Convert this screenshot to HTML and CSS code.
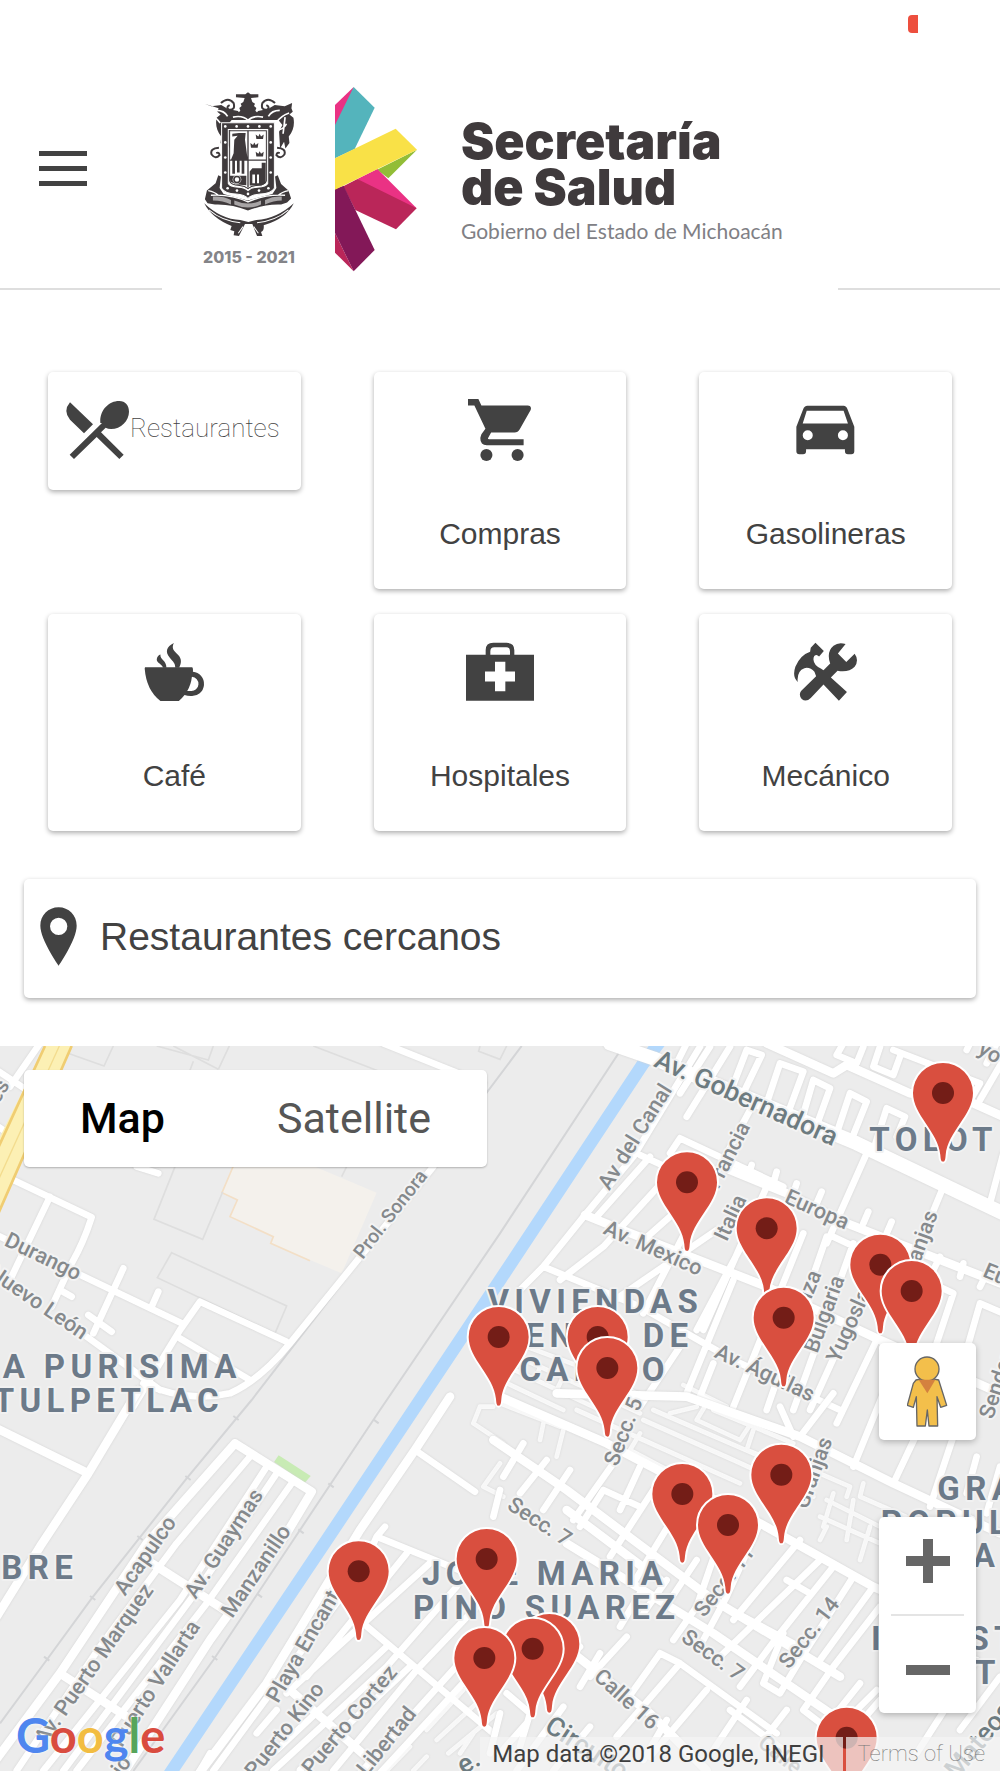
FILE: index.html
```html
<!DOCTYPE html>
<html lang="es">
<head>
<meta charset="utf-8">
<meta name="viewport" content="width=device-width, initial-scale=1">
<title>Secretaría de Salud - Lugares cercanos</title>
<link rel="stylesheet" href="styles.css">
</head>
<body>
<header class="topbar">
  <span class="badge"></span>
  <button class="menu" type="button" aria-label="Menú"><span></span><span></span><span></span></button>
  <a class="brand" href="#">
    <span class="seal">
      <svg class="crest" viewBox="611 274 274 440" aria-hidden="true">
        <g fill="#3f3a3c">
          <path d="M709 284h28l8-6 8 6h23v9l-22 2 4 12 8 5-3 7 7 6-3 8 6 6v10h-57v-10l6-6-3-8 7-6-3-7 8-5 4-12-26-2z"/>
          <path d="M615 312l20 8 30-4 20 12 30 6 10 14h40l10-14 30-6 20-12 30 4 22-10-2 16 4 10-10 8 12 10c4 20 0 40-14 56l2 20-12 16-4-20-12 20-3-50 10-20-12-15-140 0-12 15 10 20-3 50-12-20-4 20-12-16 2-20c-14-16-18-36-14-56l12-10-10-8 4-10z"/>
        </g>
        <g fill="none" stroke="#fff" stroke-width="5">
          <path d="M622 340q24 8 40 30M868 340q-24 8-40 30M630 372q6 14 22 18M860 372q-6 14-22 18M650 332q24 0 34 18M840 332q-24 0-34 18M700 352q30-6 45 10 15-16 45-10M634 352l6 50M856 352l-6 50"/>
        </g>
        <g fill="none" stroke="#3f3a3c" stroke-width="6">
          <path d="M664 310q22-20 38 0 6 22-14 20-10-8 2-14M826 310q-22-20-38 0-6 22 14 20 10-8-2-14M658 444q-28 2-22 20 12 16 24 2-2-10-10-6M832 444q28 2 22 20-12 16-24 2 2-10 10-6"/>
        </g>
        <path fill="#3f3a3c" fill-rule="evenodd" d="M667 369h157v196q-10 16-42 17-28 2-37 14-9-12-37-14-32-1-41-17zM686 389v162q4 10 30 11 20 1 29 10 9-9 29-10 26-1 30-11v-162z"/>
        <g fill="#3f3a3c">
          <path d="M690 393h110v150q-3 12-30 14-16 1-25 9-9-8-25-9-27-2-30-14z" fill="#fff" stroke="#3f3a3c" stroke-width="3"/>
          <path d="M743 393h4v170h-4zM690 479h110v4H690zM728 400l10 0-2 20 8 60h-50l8-20 2-40 10-12-16 2 0-8 20-2zM698 480h8v42h-8zM712 480h8v38h-8zM726 480h8v42h-8zM750 515l8-10h28v-16h12v60l-12 8h-36zM690 528h50v28l-28-2-20-8z"/>
          <path d="M768 404l8 6 4-8 4 8 8-6-2 14h-20zM752 430l8 6 4-8 4 8 8-6-2 14h-20zM768 456l8 6 4-8 4 8 8-6-2 14h-20z"/>
        </g>
        <g fill="#fff"><circle cx="712" cy="539" r="13"/><path d="M758 524h8v26h-8zM772 524h6v26h-6z"/></g>
        <circle cx="712" cy="539" r="9" fill="none" stroke="#3f3a3c" stroke-width="5"/>
        <path fill="#3f3a3c" d="M656 526l8 4-4 34 12 18 72 20 74-20 12-18-4-34 8-4 10 26 22 20 8 24-12 12-18 6q-50-2-99 18-49-20-99-18l-22-4-8-12 6-26 26-22z"/>
        <path fill="none" stroke="#fff" stroke-width="4" d="M626 572q20 4 30 14M866 572q-20 4-30 14M634 586q60-4 111 20 51-24 111-20"/>
        <path fill="#3f3a3c" fill-rule="evenodd" stroke="#fff" stroke-width="3" d="M666 369h158v196q-10 16-42 17-28 2-37 14-9-12-37-14-32-1-42-17zM686 389v162q4 10 30 11 20 1 29 10 9-9 29-10 26-1 30-11v-162z"/>
        <g fill="#fff"><circle cx="677" cy="380" r="4"/><circle cx="711" cy="380" r="4"/><circle cx="745" cy="380" r="4"/><circle cx="779" cy="380" r="4"/><circle cx="813" cy="380" r="4"/><circle cx="677" cy="428" r="4"/><circle cx="677" cy="473" r="4"/><circle cx="677" cy="518" r="4"/><circle cx="813" cy="428" r="4"/><circle cx="813" cy="473" r="4"/><circle cx="813" cy="518" r="4"/><circle cx="684" cy="565" r="4"/><circle cx="712" cy="572" r="4"/><circle cx="745" cy="582" r="4"/><circle cx="778" cy="572" r="4"/><circle cx="806" cy="565" r="4"/></g>
        <path fill="#a7a4a5" d="M640 590q30-2 54 10v14q-24-12-54-12zM704 602q41 18 80 0v12q-39 18-80 0zM796 600q26-12 50-10v12q-24 0-50 12z"/>
        <path fill="#3f3a3c" d="M614 610q50 48 108 50l24 6 24-6q62-4 112-50-22 46-90 66 2 16-8 20l4 12h-16l-14-36h-22l-18 36-16-2 2-12-12-4 4-12q-60-24-82-68z"/>
        <path fill="none" stroke="#fff" stroke-width="3" d="M628 630q40 34 94 38M866 630q-40 34-94 38M716 700l14-20M776 700l-14-20"/>
      </svg>
      <span class="years">2015 - 2021</span>
    </span>
    <svg class="mark" viewBox="1005 260 246 556" aria-hidden="true">
      <path fill="#ea3284" d="M1005 316l56-54-10 60-46 56z"/>
      <path fill="#54b4bc" d="M1061 262l63 62-60 124-59 28v-100z"/>
      <path fill="#92bd37" d="M1251 450l-86 86-34-26z"/>
      <path fill="#ea3284" d="M1072 538l60-30 118 118-100-20z"/>
      <path fill="#ba2659" d="M1030 560l42-22 178 88-62 63-122-58z"/>
      <path fill="#ba2659" d="M1005 700l56 115-56-56z"/>
      <path fill="#831858" d="M1005 568l26-10 93 193-63 64-56-115z"/>
      <path fill="#f9e147" d="M1005 476l182-89 64 63-246 120z"/>
    </svg>
    <span class="names"><strong>Secretaría<br>de Salud</strong><small>Gobierno del Estado de Michoacán</small></span>
  </a>
</header>
<main>
  <nav class="categories" aria-label="Categorías">
    <button class="card card-inline" type="button">
      <svg width="64" height="60" viewBox="200 150 192 180" aria-hidden="true"><path d="M212 157L281 223 254 250 212 209Q190 183 212 157zM303 219C300 180 330 152 360 153C378 154 389 165 389 185C389 212 365 237 335 237Q326 237 319 233L305 247 373 314 360 327 292 261 224 327 211 314 308 219z"/></svg><span class="thin">Restaurantes</span>
    </button>
    <button class="card" type="button">
      <svg width="67" height="67" viewBox="1400 138 200 200" aria-hidden="true"><path d="M1406 147H1437L1446 166H1584Q1597 167 1593 180L1560 238Q1555 247 1545 247H1475L1466 263Q1464 267 1469 267H1572V285H1462Q1441 284 1443 262L1446 252 1458 236 1425 166H1406z"/><circle cx="1461" cy="314" r="18"/><circle cx="1554" cy="314" r="18"/></svg>
      <span>Compras</span>
    </button>
    <button class="card" type="button">
      <svg width="67" height="67" viewBox="876 138 200 200" aria-hidden="true"><path fill-rule="evenodd" d="M922 167H1030Q1038 167 1042 178L1062 230V303Q1062 312 1053 312H1043Q1034 312 1034 303V297H918V303Q918 312 909 312H898Q889 312 889 303V230L909 178Q913 167 922 167zM920 182L908 220H1043L1030 182zM908 255a15 15 0 1 0 30 0a15 15 0 1 0-30 0M1013 255a15 15 0 1 0 30 0a15 15 0 1 0-30 0"/></svg>
      <span>Gasolineras</span>
    </button>
    <button class="card" type="button">
      <svg width="67" height="67" viewBox="424 864 200 200" aria-hidden="true"><path fill-rule="evenodd" d="M436 951H576Q580 951 579 965A36 36 0 0 1 573 1037Q562 1037 554 1034Q548 1042 537 1052H482Q440 1020 435 955zM576 980Q573 1005 562 1022H573A21 21 0 0 0 576 980z"/><path d="M522 879C515 895 520 900 535 915C547 928 544 940 538 953H526C527 940 520 935 510 923C495 905 500 890 522 879M482 913C480 928 500 930 500 953H490C487 942 471 938 471 928C471 920 477 914 482 913z"/></svg>
      <span>Café</span>
    </button>
    <button class="card" type="button">
      <svg width="70" height="67" viewBox="1395 864 210 200" aria-hidden="true"><path fill-rule="evenodd" d="M1398 914H1457V900Q1457 878 1480 878H1520Q1543 878 1543 900V914H1602V1052H1398zM1471 914H1530V903Q1530 891 1519 891H1483Q1471 891 1471 903zM1485 935V964H1455V994H1485V1023H1516V994H1545V964H1516V935z"/></svg>
      <span>Hospitales</span>
    </button>
    <button class="card" type="button">
      <svg width="67" height="67" viewBox="876 864 200 200" aria-hidden="true"><path d="M946 878L971 903 957 919 950 915Q940 915 940 928Q941 945 962 955L970 960 990 940Q978 905 1000 887Q1015 875 1036 882L1013 910 1038 936 1063 911Q1077 930 1063 950Q1045 968 1012 962L992 982 1040 1025 1016 1051 970 1003 932 1043Q918 1057 905 1046Q895 1034 903 1022L948 978 943 965Q930 950 913 954Q890 962 893 995Q876 980 886 950Q900 915 930 905L932 893z"/></svg>
      <span>Mecánico</span>
    </button>
  </nav>
  <h1 class="nearby">
    <svg width="37" height="59" viewBox="122 142 111 177" aria-hidden="true"><path fill-rule="evenodd" d="M178 143C208 143 232 167 232 198C232 240 178 318 178 318C178 318 123 240 123 198C123 167 147 143 178 143zM152 200a26 26 0 1 0 52 0a26 26 0 1 0-52 0"/></svg>
    Restaurantes cercanos
  </h1>
  <section class="map" aria-label="Mapa">
    <svg class="canvas" viewBox="0 0 3000 2175">
      <defs>
        <g id="pin"><path fill="#d94f3f" stroke="#fff" stroke-width="12" paint-order="stroke" d="M0 0C-5 0-7-4-8-20C-14-90-90-140-90-206A90 90 0 0 1 90-206C90-140 14-90 8-20C7-4 5 0 0 0z"/><circle cy="-206" r="33" fill="#731d17"/></g>
      </defs>
      <rect width="3000" height="2175" fill="#ececec"/>
      <path fill="#f4f1ec" d="M700 360H940L1130 440 1025 682 812 592 820 572 690 512 712 462 666 440z"/>
      <path fill="none" stroke="#f3dfc6" stroke-width="5" d="M700 360L666 440 712 462 690 512 820 572 812 592 930 644"/>
      <path fill="#c8ebb4" d="M836 1228L932 1290 914 1311 822 1248z"/>
      <g class="lots">
        <path d="M200 20L312 60 340 0M470 0L625 42 640 0M560 100L580 46M655 70L688 0M520 0L655 70M940 0L1200 100M1440 0L1436 16 1500 40 1520 0M525 362L462 520 608 580 668 438M515 620L860 780 825 862 472 695zM1040 362L1025 392"/>
      </g>
      <g class="rail">
        <path d="M1870 0L1500 562 1140 1092 880 1482 640 1842 400 2175M1565 0L1280 380 960 797 755 1062 560 1297 275 1657 140 1842 0 2032M1120 1120l16 12M985 1312l16 12M895 1450l16 12M770 1642l16 12M636 1830l16 12M700 1110l16 12M556 1290l16 12M412 1470l16 12M270 1650l16 12M132 1832l16 12"/>
      </g>
      <path class="river" d="M1985-20L1930 52 1500 702 1250 1077 980 1482 505 2190"/>
      <g class="roads" transform="translate(0 -48)">
        <path class="w14" d="M120 40L30 170M-10 120L80 180M-5 290L40 320M1150 40L1450 160M1300 410L870 940Q780 1050 690 1090Q560 1120 430 1060M40 450L275 562Q250 640 215 700L155 830M150 500L30 750M-20 610L545 880M370 715L280 910M475 785L455 830M410 410L475 430M600 815L540 900 400 1130M600 815L860 935M540 925L750 1050M260 920L480 1080M265 855L335 905M180 780L215 800"/>
      </g>
      <path fill="#fcf0b4" d="M135 0H215L-4 500V280z"/>
      <path fill="none" stroke="#f0cd72" stroke-width="8" d="M135 0L-4 302M215 0L-4 500"/>
      <path fill="none" stroke="#f3dc8e" stroke-width="4" d="M178 0L-4 400"/>
      <g class="roads" transform="translate(1500 -48)">
        <path class="w24" d="M330 40L460 85 1070 340 1510 550"/>
        <path class="w18" d="M255 555L380 605 800 770 1140 930 1500 1090M690 420L860 490 1040 580 1500 760M800 40L1000 130 1040 105 1230 190M1230 190L1420 220 1510 260"/>
        <path class="w14" d="M600 50L400 380 255 555 130 710M420 375L540 430M540 325L510 370M540 325L850 470M560 40L520 120M630 50L540 190M690 50L560 260M740 60L690 190M740 60L785 75 720 210M840 100L800 220M840 100L910 125 860 260M940 150L905 270M940 150L990 175 945 300M1050 190L1010 310M1050 190L1100 215 1050 340M1160 235L1120 360M1160 235L1215 260 1190 320M1030 40L1010 75 1070 100 1090 50M1140 50L1120 110 1180 135 1200 80M1180 60L1440 160 1400 230M1100 370L980 640M1330 470L1260 640M1510 370L1470 520M450 380L290 560M520 420L310 650 180 750M600 480L420 640M650 600L330 820M750 240L600 520 430 850M800 470L610 900M750 600L590 900M910 610L700 1130M980 620L800 1140M1000 620L1360 790 1290 1000M1060 640L880 1140M1130 930L1010 1180M1030 920L930 1140M130 710L420 830 700 990 1020 1140M130 710L60 780M540 950L420 1130M640 1000L600 1100 720 1160M700 750L560 1090M750 420L755 405M820 460L830 425M880 490L890 460M950 520L965 485M1090 580L1105 545M1160 610L1175 575M1380 740L1390 700M1440 770L1460 730M1440 820L1400 960M1440 820L1510 850M1320 680L1280 760M1490 40L1460 100M1410 40L1400 60M1510 90L1440 210"/>
        <path class="w8" d="M0 920L240 1010 430 1100M0 960L120 1010 420 1150M0 1000L130 1060 300 1140M0 1050L190 1140M120 1010L110 1040M190 1040L170 1080M550 1065L680 1130"/>
      </g>
      <g class="roads" transform="translate(0 1062)">
        <path class="w18" d="M-10 85L265 220M415-30L265 220 120 440-10 650M705 130L440 430 180 820-20 1090M705 130L935 275 860 400 630 720 370 1120M180 820L380 950M440 480L690 640M1350-10L1245 150 1080 390 800 850 590 1130M870 870L1110 1080"/>
        <path class="w14" d="M750 170L530 430 300 740 50 1112M800 200L540 600 130 1112M830 220L600 560 190 1112M875 250L620 610 230 1112M1245 150L1425 275M1155 380L1130 410 1500 560M1220 460L920 830M1300 480L860 880M1370 560L1160 800 820 1112M1090 670L1480 1000M1430 620L1250 810 1000 1112M1440 720L1080 1120M1490 740L1130 1130M1160 740L830 1050M1230 800L900 1110M830 930L770 1000M630 1060L600 1112M1130 410L1090 500 640 1112"/>
        <path class="w8" d="M1480 20L1440 20 1420 70 1510 130M1500 190L1450 260 1510 290M1390 870L1280 990M1440 900L1310 1020M1490 940L1345 1060M1230 1040L1160 1112M1280 1070L1240 1112M1420 1000L1380 1060"/>
      </g>
      <g class="roads" transform="translate(1500 1062)">
        <path class="w18" d="M-20 120L200 270 640 600 1020 830M0-10L320 130 780 370 1120 560 1280 630M170-20L560-10 900 110 1180 250 1500 400M220 760L450 940 620 1112M480 540L200 330M200 430L640 700 1020 960"/>
        <path class="w14" d="M0 270L-20 350M70 130L10 230M140 180L60 280M210 210L130 330M340 190L220 360M240 380L310 270 420 320M420 200L360 330M540 320L400 550M460 270L330 470M590 480L510 600M690 330L590 620 520 720M780 370L680 590 610 720M900 420L700 660M960 480L660 770M1000 500L840 700 720 860M1060 530L900 780 840 880 790 850 850 700M1120 560L960 780M1140 620L1000 800 910 930 1080 1060M880 110L840 20M1000-20L900 110M1150-20L1060 200M1270 60L1180 250M1270 60L1150-10M1360 110L1290 320M1430 170L1400 280M1500 200L1460 340M480 760L540 790 350 1010M480 760L380 900M540 790L830 1000M620 870L450 1070M740 900L640 1050M690 930L850 1050M860 930L790 1020M1080 850L960 1000M1140 900L1010 1050M20 880L90 940 60 1040M500 960L430 1080M380 710L270 830M240 740L170 800M300 760L240 860M0 940L-30 1060M80 970L0 1060M190 920L50 1112M270 980L160 1112M500 540L430 640M420 580L360 680M860 540L930 580M730 650L880 730M1130 870L1060 940M1430 780L1250 1060M1500 830L1380 990"/>
        <path class="w8" d="M0 10L180 80M190 90L170 170M130 70L120 120M230 30L430 120 720 250M430 60L700 180 940 290M460 30L760 160 950 240M420 100L390 150 560 240M510 40L590 20M620 10L590 60 720 120 760 60M640 30L880 130M760 90L740 150 940 230M820 160L1050 260 1040 290M1090 250L1080 290 1240 360M980 300L1160 390M960 350L1140 430M1000 280L970 380M1060 300L1040 420M1110 380L1080 480M980 380L960 420"/>
      </g>
      <g class="streets">
        <g transform="translate(0 -48)">
          <text transform="translate(10 645) rotate(26)">Durango</text>
          <text transform="translate(-40 738) rotate(34)">Nuevo León</text>
          <text class="alley" transform="translate(1088 690) rotate(-52)">Prol. Sonora</text>
          <text transform="translate(-60 320) rotate(-60)">Flores</text>
        </g>
        <g transform="translate(1500 -48)">
          <text class="avenue" transform="translate(458 108) rotate(24)">Av. Gobernadora</text>
          <text transform="translate(328 484) rotate(-58)">Av del Canal</text>
          <text transform="translate(655 480) rotate(-63)">Francia</text>
          <text transform="translate(680 637) rotate(-65)">Italia</text>
          <text transform="translate(850 517) rotate(24)">Europa</text>
          <text transform="translate(307 610) rotate(24)">Av. Mexico</text>
          <text transform="translate(640 980) rotate(25)">Av. Águilas</text>
          <text transform="translate(905 880) rotate(-68)">Suiza</text>
          <text transform="translate(952 972) rotate(-70)">Bulgaria</text>
          <text transform="translate(1018 1002) rotate(-66)">Yugoslavia</text>
          <text transform="translate(1238 760) rotate(-70)">Granjas</text>
          <text transform="translate(1445 738) rotate(23)">Europa</text>
          <text transform="translate(1430 68) rotate(30)">yo</text>
        </g>
        <g transform="translate(0 1062)">
          <text transform="translate(375 590) rotate(-55)">Acapulco</text>
          <text transform="translate(587 600) rotate(-57)">Av. Guaymas</text>
          <text transform="translate(697 657) rotate(-56)">Manzanillo</text>
          <text transform="translate(136 1037) rotate(-55)">Av. Puerto Marquez</text>
          <text transform="translate(365 1045) rotate(-57)">Puerto Vallarta</text>
          <text transform="translate(834 912) rotate(-60)">Playa Encanto</text>
          <text transform="translate(765 1137) rotate(-52)">Puerto Kino</text>
          <text transform="translate(935 1128) rotate(-50)">Puerto Cortez</text>
          <text transform="translate(1100 1130) rotate(-51)">Libertad</text>
          <text transform="translate(345 1160) rotate(-55)">nio</text>
          <text class="avenue" transform="translate(1390 1125) rotate(-30)">e.</text>
        </g>
        <g transform="translate(1500 1062)">
          <text transform="translate(352 202) rotate(-69)">Secc. 5</text>
          <text transform="translate(18 325) rotate(33)">Secc. 7</text>
          <text transform="translate(613 655) rotate(-52)">Secc. 11</text>
          <text transform="translate(540 720) rotate(36)">Secc. 7</text>
          <text transform="translate(867 810) rotate(-52)">Secc. 14</text>
          <text transform="translate(922 330) rotate(-70)">Granjas</text>
          <text transform="translate(278 835) rotate(42)">Calle 16</text>
          <text transform="translate(770 1036) rotate(38)">Calle</text>
          <text transform="translate(1478 60) rotate(-72)">Sendero</text>
          <text class="avenue" transform="translate(130 990) rotate(33)">Circuito</text>
          <text class="avenue" transform="translate(1370 1140) rotate(-50)">Mateos</text>
        </g>
      </g>
      <g class="districts">
        <text x="725" y="995" text-anchor="end">LA PURISIMA</text>
        <text x="672" y="1097" text-anchor="end">TULPETLAC</text>
        <text x="1786" y="802" text-anchor="middle">VIVIENDAS</text>
        <text x="2080" y="904" text-anchor="end">VENTA DE</text>
        <text x="1784" y="1005" text-anchor="middle">CARPIO</text>
        <text x="2608" y="314">TOLOT</text>
        <text x="4" y="1599">BRE</text>
        <text x="1635" y="1617" text-anchor="middle">JOSE MARIA</text>
        <text x="1640" y="1719" text-anchor="middle">PINO SUAREZ</text>
        <text x="2812" y="1361">GRANJAS</text>
        <text x="2642" y="1463">POPULAR</text>
        <text x="2918" y="1564">AR</text>
        <text x="2613" y="1813">INDUST</text>
        <text x="2925" y="1915">TE</text>
      </g>
      <g class="pins">
        <use href="#pin" x="2829" y="347"/><use href="#pin" x="2061" y="615"/><use href="#pin" x="2300" y="753"/>
        <use href="#pin" x="2641" y="862"/><use href="#pin" x="2735" y="941"/><use href="#pin" x="2351" y="1021"/>
        <use href="#pin" x="1496" y="1079"/><use href="#pin" x="1793" y="1079"/><use href="#pin" x="1822" y="1172"/>
        <use href="#pin" x="2344" y="1492"/><use href="#pin" x="2047" y="1550"/><use href="#pin" x="2184" y="1643"/>
        <use href="#pin" x="1460" y="1745"/><use href="#pin" x="1076" y="1782"/><use href="#pin" x="1648" y="2000"/>
        <use href="#pin" x="1598" y="2014"/><use href="#pin" x="1453" y="2042"/><use href="#pin" x="2540" y="2281"/>
      </g>
    </svg>
    <div class="map-type">
      <button class="active" type="button">Map</button>
      <button type="button">Satellite</button>
    </div>
    <div class="map-tools">
      <button class="tool" type="button" aria-label="Street View">
        <svg width="42" height="72" viewBox="1218 978 126 216" aria-hidden="true"><g fill="#f3bf4b" stroke="#666" stroke-width="4" stroke-linejoin="round"><path d="M1245 1050Q1278 1040 1313 1050L1337 1126 1319 1132 1308 1100 1310 1188H1284L1279 1140 1273 1188H1248L1246 1100 1237 1132 1219 1126 1237 1060z"/><circle cx="1278" cy="1017" r="36"/></g><path fill="#d4813f" d="M1253 1049H1303L1279 1090z"/></svg>
      </button>
      <div class="zoom">
        <button type="button" aria-label="Acercar"><svg width="44" height="44" viewBox="0 0 44 44" aria-hidden="true"><path d="M17 0h10v17h17v10h-17v17h-10v-17h-17v-10h17z"/></svg></button>
        <hr>
        <button type="button" aria-label="Alejar"><svg width="44" height="10" viewBox="0 0 44 10" aria-hidden="true"><path d="M0 0h44v10H0z"/></svg></button>
      </div>
    </div>
    <a class="google" href="#"><span class="b">G</span><span class="r">o</span><span class="y">o</span><span class="b">g</span><span class="g">l</span><span class="r">e</span></a>
    <div class="legal"><span>Map data ©2018 Google, INEGI</span><a href="#">Terms of Use</a></div>
  </section>
</main>
</body>
</html>
```
FILE: styles.css
```css
* { box-sizing: border-box; }
body {
  margin: 0;
  background: #fff;
  color: #424242;
  font-family: "Liberation Sans", Arial, sans-serif;
}
button {
  border: 0;
  padding: 0;
  background: none;
  color: inherit;
  font: inherit;
}
a { color: inherit; text-decoration: none; }

/* Header */
.topbar {
  position: relative;
  display: grid;
  grid-template-columns: 1fr 676px 1fr;
  align-items: end;
  height: 290px;
  background: linear-gradient(#dedede, #dedede) bottom / 100% 2px no-repeat;
}
.badge {
  position: absolute;
  top: 15px;
  right: 82px;
  width: 10px;
  height: 18px;
  border-radius: 4px 0 0 4px;
  background: #ed4f3e;
}
.menu {
  display: flex;
  flex-direction: column;
  gap: 10px;
  width: 48px;
  margin: 0 0 104px 39px;
}
.menu span { height: 5px; background: #424242; }
.brand {
  display: flex;
  align-items: flex-start;
  height: 204px;
  padding-left: 40px;
  background: #fff;
}
.seal {
  display: flex;
  flex-direction: column;
  align-items: center;
  width: 94px;
  padding-top: 5px;
}
.crest { width: 94px; height: 147px; }
.years {
  margin-top: 7px;
  color: #848488;
  font: 800 16px/24px Inter, sans-serif;
  white-space: nowrap;
}
.mark { width: 82px; height: 186px; margin-left: 39px; }
.names { padding: 32px 0 0 44px; }
.names strong {
  display: block;
  color: #3f3a3c;
  font: 900 50px/46px Inter, sans-serif;
  white-space: nowrap;
}
.names small {
  display: block;
  margin-top: 7px;
  color: #808085;
  font: 400 21px/28px Lato, sans-serif;
  white-space: nowrap;
}

/* Category cards */
.categories {
  display: grid;
  grid-template-columns: repeat(3, 1fr);
  gap: 25px 73px;
  align-items: start;
  padding: 82px 48px 48px;
}
.card, .nearby {
  border-radius: 5px;
  background: #fff;
  box-shadow: 0 2px 5px rgba(0, 0, 0, .32);
}
.card {
  display: flex;
  flex-direction: column;
  align-items: center;
  gap: 51px;
  height: 217px;
  padding-top: 24px;
  font-size: 30px;
  line-height: 40px;
}
.card svg, .nearby svg { flex: none; fill: #424242; }
.card-inline {
  flex-direction: row;
  align-items: flex-start;
  gap: 0;
  height: 118px;
  padding: 28px 0 0 18px;
}
.thin { font: 100 26px/56px Roboto, sans-serif; }
.nearby {
  display: flex;
  align-items: center;
  gap: 23px;
  height: 119px;
  margin: 0 24px 48px;
  padding: 0 16px 4px;
  font-size: 39px;
  font-weight: 400;
}

/* Map */
.map {
  position: relative;
  margin-bottom: 7px;
  overflow: hidden;
  font-family: Roboto, sans-serif;
}
.canvas { display: block; width: 100%; height: auto; }
.lots path { fill: none; stroke: #dedede; stroke-width: 5; }
.rail path { fill: none; stroke: #d4d5d7; stroke-width: 6; }
.river { fill: none; stroke: #b3d8fc; stroke-width: 38; }
.roads { fill: none; stroke: #fff; stroke-linecap: round; stroke-linejoin: round; filter: drop-shadow(0 0 3px #d2d2d2); }
.w8 { stroke-width: 14; opacity: .8; }
.w14 { stroke-width: 20; }
.w18 { stroke-width: 26; }
.w24 { stroke-width: 42; }
.streets text {
  fill: #85898c;
  stroke: #f3f3f3;
  stroke-width: 12;
  stroke-linejoin: round;
  paint-order: stroke;
  font-size: 65px;
  font-weight: 500;
}
.streets .alley { font-size: 58px; }
.streets .avenue { fill: #6d7b80; font-size: 80px; }
.districts text {
  fill: #6c7a89;
  stroke: #f1f1f1;
  stroke-width: 12;
  stroke-linejoin: round;
  paint-order: stroke;
  font-size: 99px;
  font-weight: 700;
  letter-spacing: 16px;
}
.map-type {
  position: absolute;
  top: 24px;
  left: 24px;
  display: flex;
  height: 97px;
  border-radius: 5px;
  background: #fff;
  box-shadow: 0 1px 2px rgba(0, 0, 0, .25);
}
.map-type button { padding: 0 56px 2px; color: #565656; font-size: 43px; }
.map-type .active { color: #000; font-weight: 500; }
.map-tools {
  position: absolute;
  right: 24px;
  bottom: 58px;
  display: flex;
  flex-direction: column;
  gap: 77px;
  width: 97px;
}
.tool, .zoom {
  border-radius: 5px;
  background: #fff;
  box-shadow: 0 2px 6px rgba(0, 0, 0, .25);
}
.tool { display: grid; place-items: center; height: 97px; }
.zoom { display: flex; flex-direction: column; height: 196px; }
.zoom button { display: grid; flex: 1; place-items: center; }
.zoom button:first-child { padding-bottom: 10px; }
.zoom button:last-child { padding-top: 10px; }
.zoom svg { fill: #666; }
.zoom hr { width: 73px; height: 2px; margin: 0 auto; border: 0; background: #e4e4e4; }
.google {
  position: absolute;
  bottom: 6px;
  left: 16px;
  font: 700 47px/60px Lato, sans-serif;
  text-shadow: 0 0 3px #fff;
}
.b { color: #4f86ef; }
.r { color: #d94c3f; }
.y { color: #f2bd42; }
.g { color: #57a55b; }
.legal {
  position: absolute;
  right: 0;
  bottom: 0;
  display: flex;
  gap: 3px;
  color: #3f3f3f;
  font-size: 24px;
  line-height: 34px;
}
.legal span { padding: 0 18px 0 12px; }
.legal a { padding: 0 15px 0 12px; color: #777; font-size: 22px; font-weight: 100; }
.legal span, .legal a { background: rgba(245, 245, 245, .7); }
```
